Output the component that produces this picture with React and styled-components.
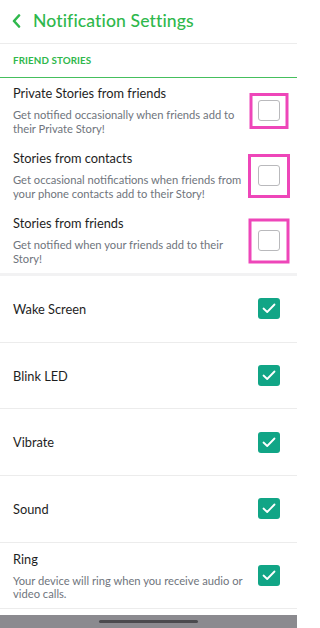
import React from "react";
import styled, { createGlobalStyle } from "styled-components";

const Global = createGlobalStyle`
  html, body { margin: 0; padding: 0; background: #ffffff; }
  body { font-family: "Lato", "Open Sans", sans-serif; -webkit-font-smoothing: antialiased; }
  * { box-sizing: border-box; }
`;

const GREEN = "#2fb84c";

const Page = styled.div`
  width: 297px;
  height: 628px;
  display: flex;
  flex-direction: column;
  background: #fff;
  overflow: hidden;
`;

const Header = styled.header`
  height: 44px;
  flex: none;
  display: flex;
  align-items: center;
  gap: 12px;
  padding: 0 0 2px 12px;
  border-bottom: 1px solid #ececec;
`;

const Title = styled.h1`
  margin: 0;
  font-size: 17.6px;
  font-weight: 500;
  color: ${GREEN};
  letter-spacing: 0.1px;
`;

const SectionLabel = styled.div`
  height: 34px;
  flex: none;
  display: flex;
  align-items: center;
  padding: 0 0 1px 13px;
  font-size: 9.8px;
  font-weight: 700;
  color: ${GREEN};
  letter-spacing: 0.1px;
  border-bottom: 1px solid #45bf5d;
`;

const StoryRow = styled.div`
  height: 65px;
  flex: none;
  display: flex;
  align-items: center;
  padding: 0 17px 0 13px;
`;

const ToggleRow = styled.div`
  height: 66.7px;
  flex: none;
  display: flex;
  align-items: center;
  padding: 0 17px 0 13px;
  border-bottom: 1px solid #ececec;
`;

const TextCol = styled.div`
  flex: 1;
  display: flex;
  flex-direction: column;
  gap: 7px;
  padding-right: 8px;
  white-space: nowrap;
`;

const RowTitle = styled.div`
  font-size: 12.8px;
  color: #1e1e1e;
  line-height: 16px;
`;

const RowDesc = styled.div`
  font-size: 11.2px;
  color: #6f757d;
  line-height: 13.6px;
`;

const SectionGap = styled.div`
  height: 3px;
  flex: none;
  background: #f2f2f3;
`;

const CheckSlot = styled.div`
  position: relative;
  width: 22px;
  height: 21px;
  flex: none;
`;

const Highlight = styled.div`
  position: absolute;
  left: 50%;
  top: 50%;
  width: ${(p) => p.$w}px;
  height: ${(p) => p.$h}px;
  transform: translate(-50%, -50%);
  border: 3px solid #ee46b9;
  pointer-events: none;
`;

const Box = styled.div`
  width: 22px;
  height: 21px;
  border-radius: 3px;
  display: flex;
  align-items: center;
  justify-content: center;
  background: ${(p) => (p.$checked ? "#11a586" : "#ffffff")};
  border: ${(p) => (p.$checked ? "none" : "1px solid #b9b9bc")};
`;

const Spacer = styled.div`
  flex: 1;
`;

const NavBar = styled.div`
  height: 13px;
  flex: none;
  background: #8b8a8f;
  display: flex;
  align-items: center;
  justify-content: center;
`;

const HomeIndicator = styled.div`
  width: 99px;
  height: 3px;
  border-radius: 2px;
  background: #4b4a4e;
`;

const Chevron = () => (
  <svg width="9" height="14" viewBox="0 0 9 14">
    <polyline
      points="7,1.5 2,7 7,12.5"
      fill="none"
      stroke={GREEN}
      strokeWidth="2.6"
      strokeLinecap="round"
      strokeLinejoin="round"
    />
  </svg>
);

const Checkbox = ({ checked, highlight }) => (
  <CheckSlot>
    <Box $checked={checked}>
      {checked && (
        <svg width="14" height="11" viewBox="0 0 14 11">
          <polyline
            points="1.5,5.5 5.2,9 12.5,1.5"
            fill="none"
            stroke="#fff"
            strokeWidth="1.8"
            strokeLinecap="round"
            strokeLinejoin="round"
          />
        </svg>
      )}
    </Box>
    {highlight && <Highlight $w={highlight[0]} $h={highlight[1]} />}
  </CheckSlot>
);

const stories = [
  {
    title: "Private Stories from friends",
    desc: ["Get notified occasionally when friends add to", "their Private Story!"],
    hl: [39, 36],
  },
  {
    title: "Stories from contacts",
    desc: ["Get occasional notifications when friends from", "your phone contacts add to their Story!"],
    hl: [42, 44],
  },
  {
    title: "Stories from friends",
    desc: ["Get notified when your friends add to their", "Story!"],
    hl: [41, 45],
  },
];

const toggles = [
  { title: "Wake Screen" },
  { title: "Blink LED" },
  { title: "Vibrate" },
  { title: "Sound" },
  {
    title: "Ring",
    desc: ["Your device will ring when you receive audio or", "video calls."],
  },
];

export default function App() {
  return (
    <Page>
      <Global />
      <Header>
        <Chevron />
        <Title>Notification Settings</Title>
      </Header>
      <SectionLabel>FRIEND STORIES</SectionLabel>
      {stories.map((s) => (
        <StoryRow key={s.title}>
          <TextCol>
            <RowTitle>{s.title}</RowTitle>
            <RowDesc>
              {s.desc[0]}
              <br />
              {s.desc[1]}
            </RowDesc>
          </TextCol>
          <Checkbox checked={false} highlight={s.hl} />
        </StoryRow>
      ))}
      <SectionGap />
      {toggles.map((t) => (
        <ToggleRow key={t.title}>
          <TextCol>
            <RowTitle>{t.title}</RowTitle>
            {t.desc && (
              <RowDesc>
                {t.desc[0]}
                <br />
                {t.desc[1]}
              </RowDesc>
            )}
          </TextCol>
          <Checkbox checked />
        </ToggleRow>
      ))}
      <Spacer />
      <NavBar>
        <HomeIndicator />
      </NavBar>
    </Page>
  );
}
